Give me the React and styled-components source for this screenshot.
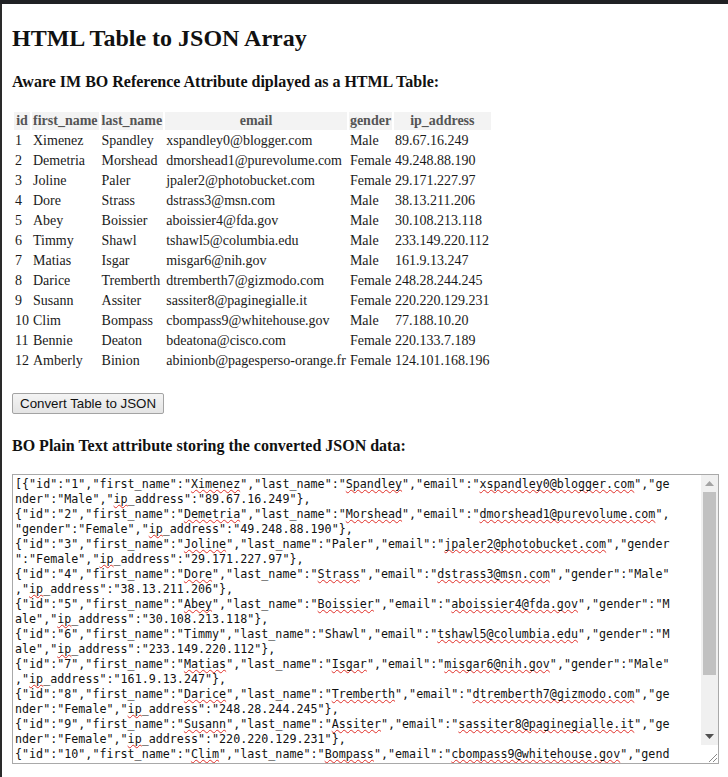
import styled, { createGlobalStyle } from "styled-components";

const GlobalStyle = createGlobalStyle`
  body {
    margin: 0;
    background: #fff;
    font-family: "Liberation Serif", "Times New Roman", serif;
    color: #111;
  }
`;

const rows = [
  ["1", "Ximenez", "Spandley", "xspandley0@blogger.com", "Male", "89.67.16.249"],
  ["2", "Demetria", "Morshead", "dmorshead1@purevolume.com", "Female", "49.248.88.190"],
  ["3", "Joline", "Paler", "jpaler2@photobucket.com", "Female", "29.171.227.97"],
  ["4", "Dore", "Strass", "dstrass3@msn.com", "Male", "38.13.211.206"],
  ["5", "Abey", "Boissier", "aboissier4@fda.gov", "Male", "30.108.213.118"],
  ["6", "Timmy", "Shawl", "tshawl5@columbia.edu", "Male", "233.149.220.112"],
  ["7", "Matias", "Isgar", "misgar6@nih.gov", "Male", "161.9.13.247"],
  ["8", "Darice", "Tremberth", "dtremberth7@gizmodo.com", "Female", "248.28.244.245"],
  ["9", "Susann", "Assiter", "sassiter8@paginegialle.it", "Female", "220.220.129.231"],
  ["10", "Clim", "Bompass", "cbompass9@whitehouse.gov", "Male", "77.188.10.20"],
  ["11", "Bennie", "Deaton", "bdeatona@cisco.com", "Female", "220.133.7.189"],
  ["12", "Amberly", "Binion", "abinionb@pagesperso-orange.fr", "Female", "124.101.168.196"],
];

const columns = ["id", "first_name", "last_name", "email", "gender", "ip_address"];

// words the spell checker flags in the text box
const flagged = new Set([
  "Ximenez", "Spandley", "Demetria", "Morshead", "Joline", "Dore", "Strass",
  "Abey", "Boissier", "Matias", "Isgar", "Darice", "Tremberth", "Susann",
  "Assiter", "Clim", "Bompass", "Bennie", "Deaton", "Amberly", "Binion",
]);

const LINE_CHARS = 93;

function recordSegments(r, i, n) {
  const segs = [];
  const push = (t, bad = false) => segs.push({ t, bad });
  push((i === 0 ? "[" : "") + `{"id":"${r[0]}","first_name":"`);
  push(r[1], flagged.has(r[1]));
  push(`","last_name":"`);
  push(r[2], flagged.has(r[2]));
  push(`","email":"`);
  push(r[3], true);
  push(`","gender":"${r[4]}","`);
  push("ip", true);
  push(`_address":"${r[5]}"}` + (i === n - 1 ? "]" : ","));
  return segs;
}

function wrapSegments(segs) {
  const lines = [];
  let line = [];
  let len = 0;
  segs.forEach((s) => {
    let t = s.t;
    while (t.length) {
      const part = t.slice(0, LINE_CHARS - len);
      line.push({ t: part, bad: s.bad });
      len += part.length;
      t = t.slice(part.length);
      if (len === LINE_CHARS) {
        lines.push(line);
        line = [];
        len = 0;
      }
    }
  });
  if (line.length) lines.push(line);
  return lines;
}

const jsonLines = rows.flatMap((r, i) => wrapSegments(recordSegments(r, i, rows.length)));

export default function App() {
  return (
    <>
      <GlobalStyle />
      <TopBar />
      <Page>
        <Title>HTML Table to JSON Array</Title>
        <Heading>Aware IM BO Reference Attribute diplayed as a HTML Table:</Heading>
        <DataTable>
          <thead>
            <tr>
              {columns.map((c) => (
                <Th key={c}>{c}</Th>
              ))}
            </tr>
          </thead>
          <tbody>
            {rows.map((r) => (
              <tr key={r[0]}>
                {r.map((v, i) => (
                  <Td key={i}>{v}</Td>
                ))}
              </tr>
            ))}
          </tbody>
        </DataTable>
        <ConvertButton>Convert Table to JSON</ConvertButton>
        <Heading $top={22}>BO Plain Text attribute storing the converted JSON data:</Heading>
        <TextFrame>
          <TextArea>
            {jsonLines.map((line, i) => (
              <Line key={i}>
                {line.map((s, j) => (s.bad ? <Flagged key={j}>{s.t}</Flagged> : s.t))}
              </Line>
            ))}
          </TextArea>
          <ScrollBar>
            <ArrowButton>
              <svg width="9" height="5" viewBox="0 0 9 5">
                <path d="M0 5 L4.5 0 L9 5 Z" fill="#a3a3a3" />
              </svg>
            </ArrowButton>
            <Track>
              <Thumb />
            </Track>
            <ArrowButton>
              <svg width="9" height="5" viewBox="0 0 9 5">
                <path d="M0 0 L4.5 5 L9 0 Z" fill="#505050" />
              </svg>
            </ArrowButton>
            <Resizer>
              <svg width="9" height="9" viewBox="0 0 9 9">
                <path d="M1 9 L9 1 M5 9 L9 5" stroke="#8a8a8a" strokeWidth="1" fill="none" />
              </svg>
            </Resizer>
          </ScrollBar>
        </TextFrame>
      </Page>
    </>
  );
}

const TopBar = styled.div`
  height: 4px;
  background: #202124;
`;

const Page = styled.div`
  border-left: 2px solid #2a2a2a;
  padding: 20px 9px 13px 10px;
  min-height: 740px;
`;

const Title = styled.h1`
  margin: 0;
  font-size: 24px;
  line-height: 28px;
  font-weight: bold;
`;

const Heading = styled.h4`
  margin: ${(p) => p.$top || 20}px 0 0;
  font-size: 16px;
  line-height: 19px;
  font-weight: bold;
`;

const DataTable = styled.table`
  margin-top: 19px;
  border-spacing: 2px;
  font-size: 14px;
  line-height: 16px;
`;

const Th = styled.th`
  padding: 1px;
  background: #f3f3f3;
  color: #555;
  font-weight: bold;
  white-space: nowrap;
`;

const Td = styled.td`
  padding: 1px;
  color: #1a1a1a;
  white-space: nowrap;
`;

const ConvertButton = styled.button`
  display: block;
  margin-top: 21px;
  height: 21px;
  padding: 0 7px;
  font-family: "Liberation Sans", Arial, sans-serif;
  font-size: 13.33px;
  color: #111;
  background: linear-gradient(#f4f4f4, #e4e4e4);
  border: 1px solid #a3a3a3;
  border-radius: 2px;
`;

const TextFrame = styled.div`
  box-sizing: border-box;
  display: flex;
  margin-top: 19px;
  width: 707px;
  height: 290px;
  border: 1px solid #a9a9a9;
  background: #fff;
`;

const TextArea = styled.div`
  flex: 1;
  min-width: 0;
  padding: 2px;
  overflow: hidden;
  font-family: "DejaVu Sans Mono", "Liberation Mono", monospace;
  font-size: 11.7px;
  line-height: 15px;
  color: #111;
`;

const Line = styled.div`
  white-space: pre;
`;

const Flagged = styled.span`
  text-decoration: underline wavy #e0302a;
  text-decoration-thickness: 1px;
  text-underline-offset: 1px;
  text-decoration-skip-ink: none;
`;

const ScrollBar = styled.div`
  width: 17px;
  display: flex;
  flex-direction: column;
  background: #f0f0f0;
`;

const ArrowButton = styled.div`
  height: 17px;
  display: flex;
  align-items: center;
  justify-content: center;
`;

const Track = styled.div`
  flex: 1;
  padding: 0 2px;
`;

const Thumb = styled.div`
  height: 183px;
  background: #c1c1c1;
`;

const Resizer = styled.div`
  height: 17px;
  background: #fff;
  display: flex;
  align-items: flex-end;
  justify-content: flex-end;
  padding: 0 1px 1px 0;
`;
